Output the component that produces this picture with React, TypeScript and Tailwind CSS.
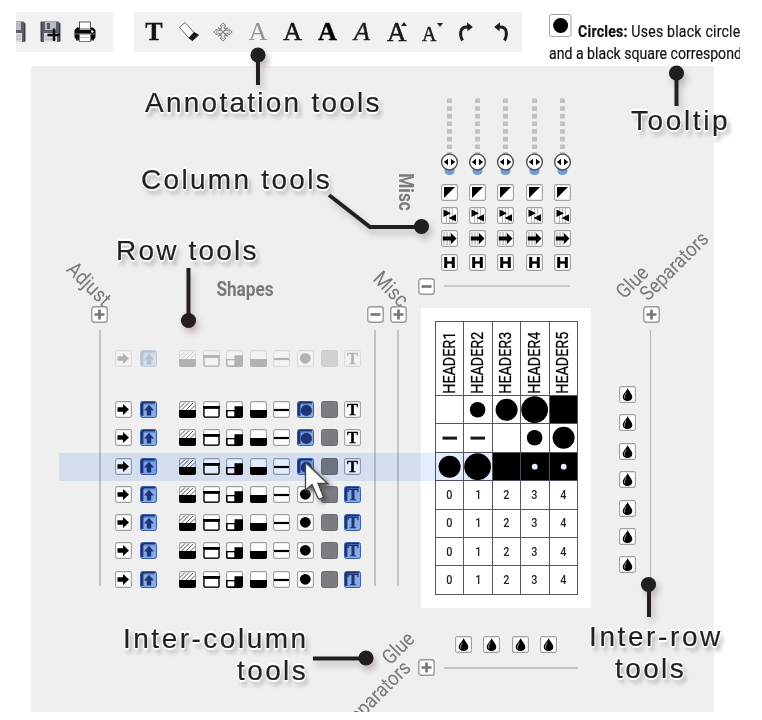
import type { ReactNode } from "react";

const COLS = [1, 2, 3, 4, 5];

function Svg({ children, size = 17 }: { children: ReactNode; size?: number }) {
  return (
    <svg width={size} height={size} viewBox="0 0 17 17" className="block shrink-0">
      {children}
    </svg>
  );
}

function Box({ children, fill = "#fff" }: { children?: ReactNode; fill?: string }) {
  return (
    <Svg>
      <rect x="0.6" y="0.6" width="15.8" height="15.8" rx="1.6" fill={fill} stroke="#9d9fa4" strokeWidth="1.1" />
      {children}
    </Svg>
  );
}

function BlueBox({ children }: { children?: ReactNode }) {
  return (
    <Svg>
      <rect x="0.5" y="0.5" width="16" height="16" rx="2" fill="#86abe0" stroke="#3a5fb0" strokeWidth="1" />
      <path d="M1 14V3Q1 1 3 1H15V2.6H4.6Q3 2.6 3 4.5V15H2Q1 15 1 14Z" fill="#1d2d66" />
      <path d="M3.3 15V5Q3.3 3 5 3H15" fill="none" stroke="#4a70bf" />
      {children}
    </Svg>
  );
}

const Letter = ({ fill, x = 8.5 }: { fill: string; x?: number }) => (
  <text
    x={x}
    y="14"
    textAnchor="middle"
    fontFamily="Liberation Serif, serif"
    fontWeight="700"
    fontSize="16.5"
    fill={fill}
    stroke={fill}
    strokeWidth="0.3"
  >
    T
  </text>
);

const RightArrow = () => (
  <Box>
    <path d="M2.5 6.3H8V3L14 8.5L8 14V10.7H2.5Z" fill="#000" />
  </Box>
);
const UpArrow = () => (
  <BlueBox>
    <path d="M9 3.8L14 9.5H11.2V14.5H6.8V9.5H4Z" fill="#1e3379" />
  </BlueBox>
);
const Hatch = () => (
  <Box>
    <path d="M1 6.5L6 1.5M2.5 9L10 1.5M7 9L14 2M11.5 9L16 4.5" stroke="#555" strokeWidth="1" />
    <path d="M0 9H17V15Q17 17 15 17H2Q0 17 0 15Z" fill="#000" />
  </Box>
);
const Bar = () => (
  <Box>
    <path d="M0 5H17V7.5H0Z" fill="#000" />
    <rect x="1" y="7.2" width="15" height="9" rx="1.5" fill="none" stroke="#000" strokeWidth="1.3" />
  </Box>
);
const Corner = () => (
  <Box>
    <path d="M8.5 5.2H17V15Q17 17 15 17H2Q0 17 0 15V9H8.5Z" fill="#000" />
    <rect x="1.6" y="10.3" width="6.7" height="5" fill="#fff" />
  </Box>
);
const Half = () => (
  <Box>
    <path d="M0 9H17V15Q17 17 15 17H2Q0 17 0 15Z" fill="#000" />
  </Box>
);
const Line = () => (
  <Box>
    <path d="M1 9H16" stroke="#000" strokeWidth="2.2" />
  </Box>
);
const Dot = ({ on }: { on: boolean }) =>
  on ? (
    <BlueBox>
      <circle cx="9.3" cy="9.4" r="5.6" fill="#1f3479" />
    </BlueBox>
  ) : (
    <Box>
      <circle cx="8.3" cy="8.3" r="5.4" fill="#000" />
    </Box>
  );
const GrayBox = () => (
  <Svg>
    <rect x="0.5" y="0.5" width="16" height="16" rx="2" fill="#7b7c81" stroke="#6b6c70" />
  </Svg>
);
const TextBox = ({ on }: { on: boolean }) =>
  on ? (
    <BlueBox>
      <Letter fill="#1e3379" x={9} />
    </BlueBox>
  ) : (
    <Box>
      <Letter fill="#000" />
    </Box>
  );

function ToolRow({ circle = false, text = false }: { circle?: boolean; text?: boolean }) {
  return (
    <div className="flex h-[28.3px] items-center">
      <RightArrow />
      <div className="w-[7.5px]" />
      <UpArrow />
      <div className="w-[22.5px]" />
      <div className="flex gap-[6.6px]">
        <Hatch />
        <Bar />
        <Corner />
        <Half />
        <Line />
        <Dot on={circle} />
        <GrayBox />
        <TextBox on={text} />
      </div>
    </div>
  );
}

const Toggle = ({ plus = false }: { plus?: boolean }) => (
  <Svg>
    <rect x="0.8" y="0.8" width="15.4" height="15.4" rx="2.5" fill="#fff" stroke="#98999c" strokeWidth="1.4" />
    <path d={plus ? "M3.5 8.5H13.5M8.5 3.5V13.5" : "M3.5 8.5H13.5"} stroke="#77787c" strokeWidth="2.7" />
  </Svg>
);

const Drop = () => (
  <Box>
    <path d="M8.7 2C9.5 5 13.3 7.8 13.3 11C13.3 13.5 11 14.9 8.5 14.9S3.7 13.5 3.7 11C3.7 8 7.8 5 8.7 2Z" fill="#000" />
    <path d="M7.3 6.5C5.8 8.5 5 10 5.8 12.6" stroke="#888" strokeWidth="1.1" fill="none" />
  </Box>
);

function ColumnTools() {
  return (
    <div className="flex w-[28.4px] flex-col items-center">
      <svg width="19" height="80" viewBox="0 0 19 80" className="mb-[6.6px] block">
        <path d="M9.5 1.5V70" stroke="#bfc1c3" strokeWidth="5" strokeDasharray="4.6 3.06" />
        <path d="M4.5 70H14.5V74Q14 78 9.5 78T4.5 74Z" fill="#6f9bd3" />
        <circle cx="9.5" cy="65" r="7.9" fill="#fff" stroke="#55575a" strokeWidth="1.5" />
        <path d="M8 61.8V68.2L3.8 65ZM11 61.8V68.2L15.2 65Z" fill="#000" />
      </svg>
      <div className="flex flex-col gap-[6.2px]">
        <Box>
          <path d="M3 3H14L3 14Z" fill="#000" />
        </Box>
        <Box>
          <path d="M5.5 1V16M8.5 1V16M11.5 1V16" stroke="#b9b9b9" strokeWidth="1" />
          <path d="M2.5 2.6L10 6.3L2.5 10ZM15 7.3L7.5 11L15 14.5Z" fill="#000" />
        </Box>
        <Box>
          <path d="M3 2V15M6 2V15M9 2V15" stroke="#b0b0b0" strokeWidth="1.2" />
          <path d="M1.8 6.5H10V3L15.5 8.5L10 14V10.5H1.8Z" fill="#000" />
        </Box>
        <Box>
          <path d="M4.7 3V14M12.3 3V14" stroke="#000" strokeWidth="3" />
          <path d="M4 8.5H13" stroke="#000" strokeWidth="2.4" />
        </Box>
      </div>
    </div>
  );
}

function Label({ className, children }: { className: string; children: ReactNode }) {
  return (
    <div className={"absolute whitespace-nowrap font-['Roboto',sans-serif] leading-[24px] text-[#77797d] " + className}>
      {children}
    </div>
  );
}

type MarkKind = number | "dash" | "full" | "hole";

const MARKS: MarkKind[][] = [
  [0, 7.8, 11, 13.4, "full"],
  ["dash", "dash", 0, 7.8, 11],
  [11, 13.4, "full", "hole", "hole"],
];

function Mark({ kind }: { kind: MarkKind }) {
  return (
    <svg width="28" height="28" viewBox="0 0 28 28" className="block">
      {kind === "dash" && <rect x="6.5" y="12.6" width="14.5" height="3" fill="#161616" />}
      {(kind === "full" || kind === "hole") && <rect width="28" height="28" fill="#000" />}
      {kind === "hole" && <circle cx="13.7" cy="13.7" r="2.9" fill="#fff" />}
      {typeof kind === "number" && kind > 0 && <circle cx="13.6" cy="13.7" r={kind} fill="#000" />}
    </svg>
  );
}

function Matrix() {
  return (
    <div className="h-[300px] w-[170px] bg-white pt-[13px] pl-[14px]">
      <div className="grid w-[143px] grid-cols-5 border-t border-l border-[#55565a]">
        {COLS.map((n) => (
          <div key={n} className="flex h-[74px] items-end justify-center border-r border-b border-[#55565a] pb-px">
            <div className="mr-[2px] w-[20px] rotate-180 [writing-mode:vertical-rl]">
              <div className="origin-top scale-y-[0.84] whitespace-nowrap font-['Roboto',sans-serif] text-[17px] leading-[20px] text-black [-webkit-text-stroke:0.25px_#000]">
                HEADER{n}
              </div>
            </div>
          </div>
        ))}
        {MARKS.flatMap((row, r) =>
          row.map((kind, c) => (
            <div key={r + "-" + c} className="h-[28.4px] overflow-hidden border-r border-b border-[#55565a]">
              <Mark kind={kind} />
            </div>
          )),
        )}
        {[0, 1, 2, 3].flatMap((r) =>
          [0, 1, 2, 3, 4].map((c) => (
            <div
              key={"n" + r + c}
              className="flex h-[28.4px] items-center justify-center border-r border-b border-[#55565a] font-['Roboto',sans-serif] text-[12px] font-medium text-[#222]"
            >
              <span className="scale-x-90">{c}</span>
            </div>
          )),
        )}
      </div>
    </div>
  );
}

function Floppy({ plus = false }: { plus?: boolean }) {
  return (
    <svg width="21" height="22" viewBox="0 0 21 22" className="block shrink-0">
      <path d="M.5 1Q.5 .5 1 .5H18.5L20.5 2.5V20Q20.5 21 19.5 21H1.5Q.5 21 .5 20Z" fill="#5b6068" />
      <path d="M1.5 1V20M19.5 3V20" stroke="#3a3e44" strokeWidth="1.2" />
      <rect x="5" y="1" width="11" height="8" fill="#b8bcc2" />
      <rect x="7" y="2" width="3" height="6" fill="#555b63" />
      <rect x="4" y="12" width="13" height="9" fill="#d9dbdf" />
      <path d="M5 15H16M5 18H16" stroke="#aaa" />
      {plus && <path d="M7.5 14H20M14 7.5V20" stroke="#111" strokeWidth="2.5" />}
    </svg>
  );
}

const Printer = () => (
  <svg width="22" height="22" viewBox="0 0 22 22" className="block shrink-0">
    <rect x="5.5" y="1" width="11" height="7" fill="#fff" stroke="#555" />
    <path d="M3 6.5H5.5V9H16.5V6.5H19L21.5 9V16Q21.5 18 19.5 18H2.5Q.5 18 .5 16V9Z" fill="#0b0b0b" />
    <path d="M1 13H21" stroke="#888" strokeWidth=".8" />
    <circle cx="18.3" cy="10.5" r="1.2" fill="#fff" />
    <rect x="5.5" y="13" width="11" height="7.5" fill="#fff" stroke="#777" />
    <path d="M2 18.5H5M17 18.5H20" stroke="#222" strokeWidth="2" />
    <path d="M7 16.5H15" stroke="#bbb" />
  </svg>
);

const Eraser = () => (
  <svg width="22" height="22" viewBox="0 0 22 22" className="block">
    <path d="M7 1.5L16.5 12L11 17L1.5 6.5Z" fill="#fff" stroke="#666" strokeWidth="1" />
    <path d="M16 11.5L20.5 14L14.5 19.5L11 17Z" fill="#18191b" stroke="#18191b" />
  </svg>
);

const Move = () => (
  <svg width="20" height="20" viewBox="0 0 20 20" className="block">
    <path
      d="M10 .8L13 4H7ZM10 19.200L13 16H7ZM.8 10L4 7V13ZM19.200 10L16 7V13Z"
      fill="#f4f4f4"
      stroke="#7d7e81"
      strokeWidth="1"
    />
    <path
      d="M10 4.500L15.500 10L10 15.500L4.500 10ZM7.200 7.200L12.800 12.800M12.800 7.200L7.200 12.800M5 5.500L7 7.500M15 5.500L13 7.500M5 14.500L7 12.500M15 14.500L13 12.500"
      fill="none"
      stroke="#8a8b8e"
      strokeWidth="1.500"
    />
    <path d="M10 4V16M4 10H16" stroke="#eeeeee" strokeWidth="1.600" />
    <rect x="8.700" y="8.700" width="2.600" height="2.600" fill="#8a8b8e" />
  </svg>
);

const Curve = ({ flip = false }: { flip?: boolean }) => (
  <svg width="16" height="22" viewBox="0 0 16 22" className={flip ? "block -scale-x-100" : "block"}>
    <path d="M4.5 19.5C1.5 14 1.5 6 8.5 6H11" fill="none" stroke="#1b1c1f" strokeWidth="2.9" />
    <path d="M9 1.2L14.8 6L9.5 10.2Z" fill="#1b1c1f" />
  </svg>
);

function Glyph({ className = "", children }: { className?: string; children: ReactNode }) {
  return (
    <div className="flex h-[40px] w-[34.7px] shrink-0 items-center justify-center">
      <span className={"relative font-['Liberation_Serif',serif] leading-[40px] " + className}>{children}</span>
    </div>
  );
}

function Caption({ className, children }: { className: string; children: ReactNode }) {
  return (
    <div
      className={
        "absolute whitespace-nowrap font-['Liberation_Sans',sans-serif] text-[28px] leading-[32px] text-[#231f20] [-webkit-text-stroke:0.2px_#231f20] [text-shadow:-1px_-1px_0_#fff,1px_-1px_0_#fff,-1px_1px_0_#fff,1px_1px_0_#fff,0_1.6px_0_#fff,0_-1.6px_0_#fff,3px_5px_4px_#aaa2a5] " +
        className
      }
    >
      {children}
    </div>
  );
}

export default function App() {
  return (
    <div className="relative h-[720px] w-[762px] overflow-hidden bg-white pt-[12px]">
      <header className="flex h-[54px] items-start pl-[16px]">
        <div className="flex h-[40px] w-[97px] items-center overflow-hidden bg-[#f1f1f1]">
          <div className="-ml-[11px] flex items-center gap-[13.5px]">
            <Floppy />
            <Floppy plus />
            <Printer />
          </div>
        </div>
        <div className="ml-[21px] flex h-[40px] w-[388px] items-center bg-[#f1f1f1] pl-[2.5px]">
          <Glyph className="text-[26px] font-bold text-[#151515] [-webkit-text-stroke:0.3px_#151515]">T</Glyph>
          <Glyph>
            <Eraser />
          </Glyph>
          <Glyph>
            <Move />
          </Glyph>
          <Glyph className="text-[26px] text-[#929396]">A</Glyph>
          <Glyph className="text-[26px] text-[#151515] [-webkit-text-stroke:0.5px_#151515]">A</Glyph>
          <Glyph className="text-[26px] font-bold text-black [-webkit-text-stroke:0.4px_#000]">A</Glyph>
          <Glyph className="text-[26px] italic text-[#151515] [-webkit-text-stroke:0.5px_#333]">A</Glyph>
          <Glyph className="text-[27px] text-[#151515] [-webkit-text-stroke:0.5px_#151515]">
            A<i className="absolute top-[10px] -right-[1px] border-x-[3px] border-b-[4px] border-x-transparent border-b-[#222]" />
          </Glyph>
          <Glyph className="top-[2px] -left-[2px] text-[20px] text-[#151515] [-webkit-text-stroke:0.4px_#151515]">
            A<i className="absolute top-[9px] -right-[6px] border-x-[3px] border-t-[4px] border-x-transparent border-t-[#222]" />
          </Glyph>
          <Glyph>
            <Curve />
          </Glyph>
          <Glyph>
            <Curve flip />
          </Glyph>
        </div>
        <div className="ml-[27px] h-[54px] w-[191px] overflow-hidden">
          <div className="w-[300px] origin-left scale-x-[0.83] font-['Roboto',sans-serif] text-[17px] leading-[22px] whitespace-nowrap text-[#111] [-webkit-text-stroke:0.2px_#111]">
            <div className="flex h-[30px] items-start">
              <div className="mt-[2px] flex h-[23px] w-[27px] items-center justify-center rounded-[3px] border border-[#999] bg-white">
                <div className="h-[15px] w-[18px] rounded-[50%] bg-black" />
              </div>
              <span className="mt-[7.5px] ml-[8px] tracking-[0.25px]">
                <b>Circles:</b> Uses black circle
              </span>
            </div>
            <div>and a black square correspond</div>
          </div>
        </div>
      </header>

      <main className="relative ml-[31px] flex h-[646px] w-[683px] overflow-hidden bg-[#efefef]">
        <section className="flex w-[390px] flex-col">
          <div className="relative h-[240px]">
            <Label className="top-[211px] left-[174px] w-[80px] scale-x-[0.86] text-center text-[20px] font-bold">Shapes</Label>
            <Label className="top-[206px] left-[27.5px] w-[60px] rotate-[45deg] scale-x-[0.88] text-center text-[21px]">Adjust</Label>
            <Label className="top-[211px] left-[335px] w-[50px] rotate-[45deg] scale-x-[0.88] text-center text-[21px]">Misc</Label>
            <Label className="top-[114px] left-[349.5px] w-[50px] rotate-90 scale-x-[0.86] text-center text-[20px] font-bold">Misc</Label>
          </div>
          <div className="flex pl-[60.4px]">
            <Toggle plus />
            <div className="w-[258.5px]" />
            <Toggle />
            <div className="w-[6.4px]" />
            <Toggle plus />
          </div>
          <div className="mt-[7px] flex h-[270px] pl-[67.5px]">
            <div className="h-[256px] w-[2px] bg-[#c2c3c6]" />
            <div className="ml-[14.5px] w-[259px] pt-[14px]">
              <div className="opacity-25">
                <ToolRow />
              </div>
              <div className="h-[23px]" />
              {[0, 1, 2, 3, 4, 5, 6].map((r) => (
                <ToolRow key={r} circle={r < 3} text={r > 2} />
              ))}
            </div>
            <div className="h-[256px] w-[2px] bg-[#c2c3c6]" />
            <div className="ml-[21px] h-[256px] w-[2px] bg-[#c2c3c6]" />
          </div>
          <div className="relative">
            <Label className="top-[36px] left-[337px] w-[60px] -rotate-[45deg] scale-x-[0.88] text-center text-[20.5px]">Glue</Label>
            <Label className="top-[82.5px] left-[285px] w-[120px] -rotate-[45deg] scale-x-[0.88] text-center text-[20.5px]">Separators</Label>
          </div>
        </section>

        <section className="relative flex w-[170px] flex-col">
          <div className="h-[242px] pt-[31.4px] pl-[14px]">
            <div className="flex h-[180.6px]">
              {COLS.map((n) => (
                <ColumnTools key={n} />
              ))}
            </div>
            <div className="-ml-[16.6px] flex items-center">
              <Toggle />
              <div className="ml-[8.5px] h-[2px] w-[126px] bg-[#c8c9cb]" />
            </div>
          </div>
          <Matrix />
          <div className="flex gap-[11.4px] pt-[28px] pl-[34px]">
            <Drop />
            <Drop />
            <Drop />
            <Drop />
          </div>
          <div className="mt-[6.4px] -ml-[2.6px] flex items-center">
            <Toggle plus />
            <div className="ml-[8.5px] h-[2px] w-[134px] shrink-0 bg-[#c2c3c6]" />
          </div>
        </section>

        <section className="flex w-[123px] flex-col">
          <div className="relative h-[240px]">
            <Label className="top-[204px] left-[11px] w-[60px] -rotate-[45deg] scale-x-[0.88] text-center text-[20.5px]">Glue</Label>
            <Label className="top-[188px] left-[23px] w-[120px] -rotate-[45deg] scale-x-[0.88] text-center text-[20.5px]">Separators</Label>
          </div>
          <div className="pl-[52px]">
            <Toggle plus />
          </div>
          <div className="mt-[7px] flex pl-[28px]">
            <div className="flex flex-col gap-[11.4px] pt-[56px]">
              {[0, 1, 2, 3, 4, 5, 6].map((r) => (
                <Drop key={r} />
              ))}
            </div>
            <div className="ml-[14px] h-[250px] w-px bg-[#b2b3b5]" />
          </div>
        </section>
        <div className="absolute top-[387px] left-[28px] h-[28px] w-[518px] bg-[#e4edff] mix-blend-multiply" />
      </main>

      <div className="absolute inset-0">
        <svg width="762" height="720" className="absolute inset-0 [filter:drop-shadow(3px_5px_3px_#c0b8bb)]">
          <g fill="#231f20" stroke="#231f20" strokeWidth="4">
            <path d="M258 85V56M676.5 106V74M188.5 268V320M649 617V585M329 195L370 227H422M313 658.5H366" fill="none" />
            <g stroke="none">
              <circle cx="258" cy="55" r="7.6" />
              <circle cx="676.5" cy="73" r="7.6" />
              <circle cx="188.5" cy="320.5" r="7.6" />
              <circle cx="648.5" cy="584.5" r="7.6" />
              <circle cx="421.5" cy="226.5" r="7.6" />
              <circle cx="366" cy="658" r="7.6" />
            </g>
          </g>
        </svg>
        <Caption className="top-[87px] left-[145px] tracking-[2.25px]">Annotation tools</Caption>
        <Caption className="top-[105px] left-[631px] tracking-[2.6px]">Tooltip</Caption>
        <Caption className="top-[164px] left-[141px] tracking-[2.3px]">Column tools</Caption>
        <Caption className="top-[235px] left-[116px] tracking-[2.2px]">Row tools</Caption>
        <Caption className="top-[623px] left-[123px] tracking-[2.5px]">Inter-column</Caption>
        <Caption className="top-[655px] left-[237px] tracking-[2.4px]">tools</Caption>
        <Caption className="top-[621px] left-[589px] tracking-[2.6px]">Inter-row</Caption>
        <Caption className="top-[653px] left-[615px] tracking-[2.4px]">tools</Caption>
        <svg width="36" height="46" viewBox="0 0 36 46" className="absolute top-[461px] left-[304px] [filter:drop-shadow(3px_3px_2px_#555)]">
          <path d="M1.5 1.5V29L8 23.5L14 37Q16 39 19.5 36L14 22.5H23.5Z" fill="#fff" stroke="#44464a" strokeWidth="1.3" />
        </svg>
      </div>
    </div>
  );
}
